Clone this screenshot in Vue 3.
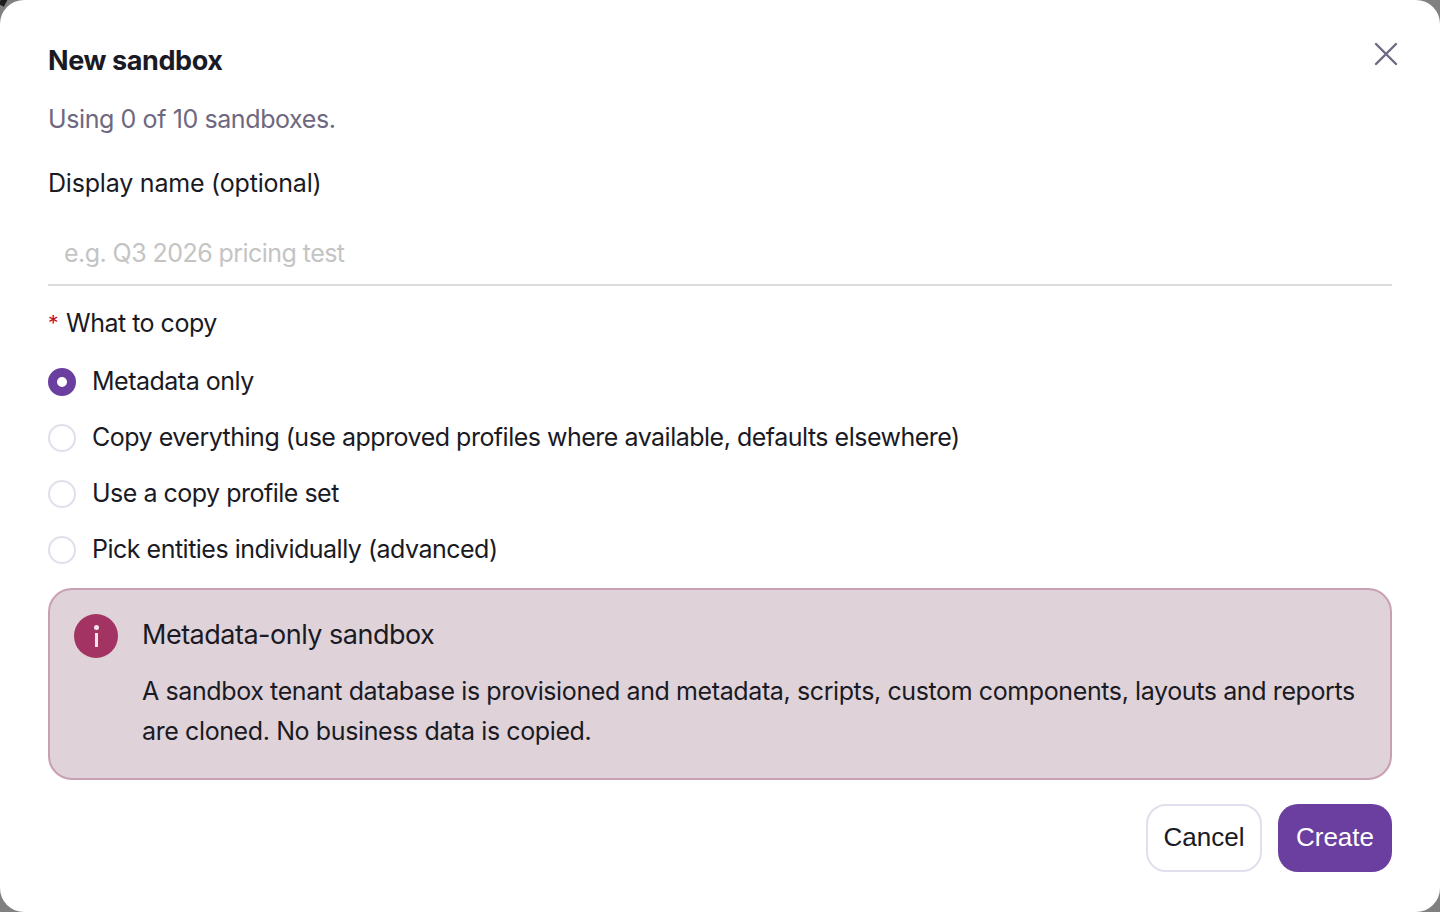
<template>
  <div class="backdrop">
    <span class="behind-mark"></span>
    <div class="modal">
      <button class="close-btn" aria-label="Close">
        <svg width="24" height="24" viewBox="0 0 24 24" fill="none" stroke="currentColor" stroke-width="2.4" stroke-linecap="round">
          <path d="M2 2 L22 22 M22 2 L2 22" />
        </svg>
      </button>

      <h2 class="title">New sandbox</h2>
      <p class="usage">Using {{ used }} of {{ limit }} sandboxes.</p>

      <label class="field-label" for="display-name">Display name (optional)</label>
      <input id="display-name" class="name-input" type="text" placeholder="e.g. Q3 2026 pricing test" />

      <div class="copy-label"><span class="required">*</span>What to copy</div>

      <div class="radio-group">
        <label v-for="opt in options" :key="opt.value" class="radio-row">
          <span class="radio" :class="{ checked: selected === opt.value }"></span>
          <span>{{ opt.label }}</span>
        </label>
      </div>

      <div class="notice">
        <div class="notice-icon">
          <span class="notice-dot"></span>
          <span class="notice-stem"></span>
        </div>
        <div class="notice-body">
          <div class="notice-title">Metadata-only sandbox</div>
          <p class="notice-text">
            A sandbox tenant database is provisioned and metadata, scripts, custom components, layouts and reports are cloned. No business data is copied.
          </p>
        </div>
      </div>

      <div class="actions">
        <button class="btn btn-cancel">Cancel</button>
        <button class="btn btn-create">Create</button>
      </div>
    </div>
  </div>
</template>

<script setup>
import { ref } from "vue";

const used = ref(0);
const limit = ref(10);
const selected = ref("metadata");

const options = [
  { value: "metadata", label: "Metadata only" },
  { value: "everything", label: "Copy everything (use approved profiles where available, defaults elsewhere)" },
  { value: "profile", label: "Use a copy profile set" },
  { value: "pick", label: "Pick entities individually (advanced)" },
];
</script>

<style scoped>
.backdrop {
  position: relative;
  width: 1440px;
  height: 912px;
  background: #808080;
  overflow: hidden;
}

/* dark sliver of the page behind the modal corner */
.behind-mark {
  position: absolute;
  top: -6px;
  left: 1px;
  width: 6px;
  height: 12px;
  background: #1c1c1c;
  transform: rotate(28deg);
}

.modal {
  position: relative;
  box-sizing: border-box;
  width: 1440px;
  height: 912px;
  padding: 41px 48px;
  background: #fff;
  border-radius: 24px;
  color: #1a1a24;
  font-family: Inter, "Liberation Sans", sans-serif;
  font-size: 25px;
  letter-spacing: -0.5px;
}

.close-btn {
  position: absolute;
  top: 42px;
  right: 42px;
  width: 24px;
  height: 24px;
  padding: 0;
  border: none;
  background: none;
  color: #6e6880;
}

.title {
  margin: 0;
  font-size: 27px;
  line-height: 40px;
  font-weight: 700;
  letter-spacing: -0.4px;
}

.usage {
  margin: 18px 0 0;
  line-height: 40px;
  letter-spacing: -0.4px;
  color: #6e6880;
}

.field-label {
  display: block;
  margin-top: 24px;
  line-height: 40px;
  letter-spacing: -0.2px;
}

.name-input {
  display: block;
  box-sizing: border-box;
  width: 100%;
  height: 73px;
  margin-top: 10px;
  padding: 8px 16px 0;
  border: none;
  border-bottom: 2px solid #dcdcdc;
  outline: none;
  background: none;
  font: inherit;
  letter-spacing: -0.55px;
}

.name-input::placeholder {
  color: #c4c4c4;
}

.copy-label {
  display: flex;
  height: 40px;
  margin-top: 17px;
  line-height: 40px;
}

.required {
  width: 18px;
  line-height: 42px;
  font-size: 21px;
  color: #c40d24;
}

.radio-group {
  display: flex;
  flex-direction: column;
  gap: 16px;
  margin-top: 18px;
}

.radio-row {
  display: flex;
  align-items: center;
  gap: 16px;
  line-height: 40px;
}

.radio {
  box-sizing: border-box;
  width: 28px;
  height: 28px;
  margin-top: 2px;
  border: 2px solid #e0e0ec;
  border-radius: 50%;
  background: #fff;
}

.radio.checked {
  border: 9px solid #6b3fa0;
}

.notice {
  display: flex;
  gap: 24px;
  box-sizing: border-box;
  height: 192px;
  margin-top: 19px;
  padding: 24px;
  background: #dfd3d9;
  border: 2px solid #c9a0b2;
  border-radius: 24px;
}

.notice-icon {
  display: flex;
  flex-direction: column;
  align-items: center;
  flex: none;
  width: 44px;
  height: 44px;
  border-radius: 50%;
  background: #a33363;
}

.notice-dot {
  width: 5px;
  height: 5px;
  margin-top: 11px;
  border-radius: 50%;
  background: #f3e4ea;
}

.notice-stem {
  width: 3px;
  height: 14px;
  margin-top: 3px;
  background: #f3e4ea;
}

.notice-title {
  line-height: 40px;
  font-size: 27px;
  margin-top: 1px;
}

.notice-text {
  margin: 16px 0 0;
  line-height: 40px;
  letter-spacing: -0.39px;
}

.actions {
  display: flex;
  justify-content: flex-end;
  gap: 16px;
  margin-top: 24px;
}

.btn {
  box-sizing: border-box;
  height: 68px;
  padding: 0 0 2px;
  border-radius: 20px;
  font-family: "Liberation Sans", sans-serif;
  font-size: 26px;
  letter-spacing: 0;
}

.btn-cancel {
  width: 116px;
  border: 2px solid #e0e0ec;
  background: #fff;
  color: #1a1a24;
}

.btn-create {
  width: 114px;
  border: none;
  background: #6b3fa0;
  color: #fff;
}
</style>
